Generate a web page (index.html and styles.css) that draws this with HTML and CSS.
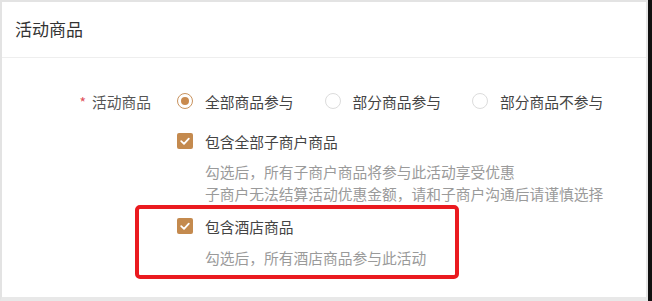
FILE: index.html
```html
<!DOCTYPE html>
<html lang="zh-CN">
<head>
<meta charset="utf-8">
<link rel="stylesheet" href="styles.css">
</head>
<body>
<div class="screen">
  <div class="panel">
    <div class="header">活动商品</div>
    <div class="form">
      <div class="row">
        <div class="label"><span class="req">*</span>活动商品</div>
        <div class="controls">
          <label class="radio checked"><span class="dot"></span>全部商品参与</label>
          <label class="radio"><span class="dot"></span>部分商品参与</label>
          <label class="radio"><span class="dot"></span>部分商品不参与</label>
        </div>
      </div>
      <div class="row row-check">
        <div class="label"></div>
        <label class="check"><span class="box"><svg viewBox="0 0 16 16" width="16" height="16"><path d="M4.2 8.2 L7 10.8 L11.8 5.6" fill="none" stroke="#fff" stroke-width="1.8" stroke-linecap="round" stroke-linejoin="round"/></svg></span>包含全部子商户商品</label>
      </div>
      <div class="hint hint-1">勾选后，所有子商户商品将参与此活动享受优惠<br>子商户无法结算活动优惠金额，请和子商户沟通后请谨慎选择</div>
      <div class="row row-check row-3">
        <div class="label"></div>
        <label class="check"><span class="box"><svg viewBox="0 0 16 16" width="16" height="16"><path d="M4.2 8.2 L7 10.8 L11.8 5.6" fill="none" stroke="#fff" stroke-width="1.8" stroke-linecap="round" stroke-linejoin="round"/></svg></span>包含酒店商品</label>
      </div>
      <div class="hint hint-2">勾选后，所有酒店商品参与此活动</div>
      <div class="highlight"></div>
    </div>
  </div>
</div>
</body>
</html>
```
FILE: styles.css
```css
* { box-sizing: border-box; }
html, body { margin: 0; padding: 0; }
body {
  background: #111;
  font-family: "Noto Sans CJK SC", "Noto Sans", sans-serif;
  width: 652px;
  height: 301px;
  overflow: hidden;
}
.screen {
  width: 648px;
  height: 301px;
}
.panel {
  width: 648px;
  height: 301px;
  background: #fff;
  border-top: 2px solid #e3e3e3;
  border-left: 2px solid #e3e3e3;
  border-right: 2px solid #e6e6e6;
  border-bottom: 4px solid #e8e8e8;
}
.header {
  height: 56px;
  padding-left: 13px;
  padding-bottom: 2px;
  display: flex;
  align-items: center;
  font-size: 17px;
  color: #333;
  border-bottom: 1px solid #eee;
}
.form {
  position: relative;
  padding-top: 28px;
}
.row {
  display: flex;
  align-items: center;
  height: 30px;
}
.label {
  width: 149px;
  margin-right: 26px;
  text-align: right;
  font-size: 14.75px;
  color: #555;
}
.req {
  color: #e0505a;
  margin-right: 6px;
  font-size: 14px;
}
.controls {
  display: flex;
  align-items: center;
}
.radio {
  display: flex;
  align-items: center;
  font-size: 14.75px;
  color: #444;
  margin-right: 31px;
}
.radio .dot {
  width: 16px;
  height: 16px;
  border-radius: 50%;
  border: 1px solid #dcdcdc;
  margin-right: 12px;
  display: inline-flex;
  align-items: center;
  justify-content: center;
}
.radio.checked .dot {
  border-color: #c9935e;
}
.radio.checked .dot::after {
  content: "";
  width: 8px;
  height: 8px;
  border-radius: 50%;
  background: #c98a4e;
}
.row-check { margin-top: 10px; }
.check {
  display: flex;
  align-items: center;
  font-size: 14.75px;
  color: #444;
}
.check .box {
  width: 16px;
  height: 16px;
  border-radius: 2px;
  background: #c48a4e;
  margin-right: 12px;
  display: inline-flex;
}
.hint {
  margin-left: 203px;
  font-size: 14.75px;
  line-height: 22px;
  color: #9a9a9a;
}
.hint-1 { margin-top: 5px; }
.row-3 { margin-top: 6px; }
.hint-2 { margin-top: 6px; }
.highlight {
  position: absolute;
  left: 133px;
  top: 147px;
  width: 324px;
  height: 74px;
  border: 4px solid #ea1a1f;
  border-radius: 5px;
}
```
